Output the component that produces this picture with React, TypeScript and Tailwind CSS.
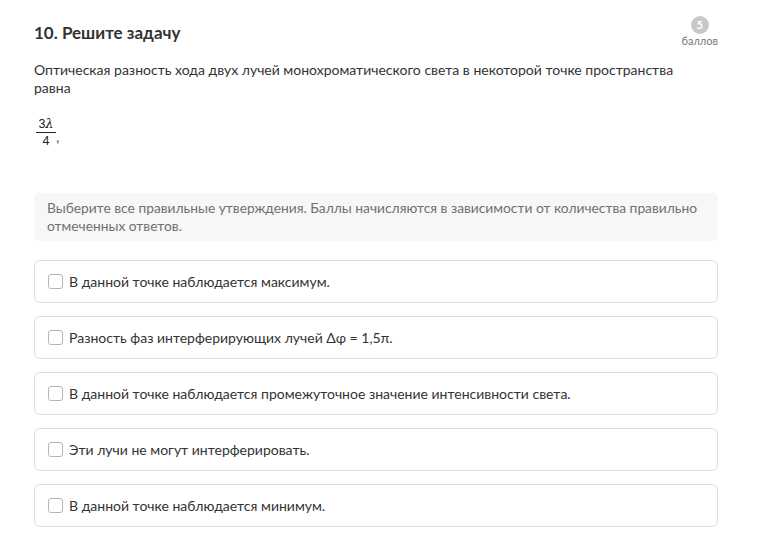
const OPTIONS = [
  "В данной точке наблюдается максимум.",
  "Разность фаз интерферирующих лучей Δφ = 1,5π.",
  "В данной точке наблюдается промежуточное значение интенсивности света.",
  "Эти лучи не могут интерферировать.",
  "В данной точке наблюдается минимум.",
];

function Option({ text }: { text: string }) {
  return (
    <label className="flex h-[43px] items-center gap-[6px] rounded-[6px] border border-[#dcdcdc] bg-white px-[13px]">
      <span className="h-[15px] w-[15px] shrink-0 rounded-[3px] border border-[#b5b5b5] bg-white" />
      <span className="text-[14px] text-[#333]">{text}</span>
    </label>
  );
}

export default function App() {
  return (
    <div className="min-h-[543px] w-[760px] bg-white pl-[34px] pr-[42px] pt-[22px] font-['Lato',sans-serif] text-[#333]">
      <div className="flex items-start justify-between">
        <h2 className="text-[17px] font-bold leading-[22px] text-[#333]">10. Решите задачу</h2>
        <div className="flex flex-col items-center">
          <span className="mt-[-6px] flex h-[18px] w-[18px] items-center justify-center rounded-full bg-[#c8c8c8] text-[11px] font-bold text-white">
            5
          </span>
          <span className="text-[11px] leading-[14px] text-[#777]">баллов</span>
        </div>
      </div>

      <p className="mt-[13px] max-w-[665px] text-[14px] leading-[18px] text-[#333]">
        Оптическая разность хода двух лучей монохроматического света в некоторой точке пространства равна
      </p>

      <div className="mt-[19px] flex items-end font-['Liberation_Sans',sans-serif] text-[12.5px] text-[#222]">
        <div className="ml-[2px] flex flex-col items-center">
          <span className="leading-[16px]">
            3<i className="font-['DejaVu_Serif',serif]">λ</i>
          </span>
          <span className="h-px w-[20px] bg-[#222]" />
          <span className="leading-[16px]">4</span>
        </div>
        <span className="mb-[5px] leading-none">,</span>
      </div>

      <div className="mt-[44px] rounded-[6px] bg-[#f7f7f7] px-[13px] py-[6px] text-[13.8px] leading-[18px] text-[#707070]">
        Выберите все правильные утверждения. Баллы начисляются в зависимости от количества правильно
        отмеченных ответов.
      </div>

      <div className="mt-[19px] flex flex-col gap-[13px]">
        {OPTIONS.map((o) => (
          <Option key={o} text={o} />
        ))}
      </div>
    </div>
  );
}
